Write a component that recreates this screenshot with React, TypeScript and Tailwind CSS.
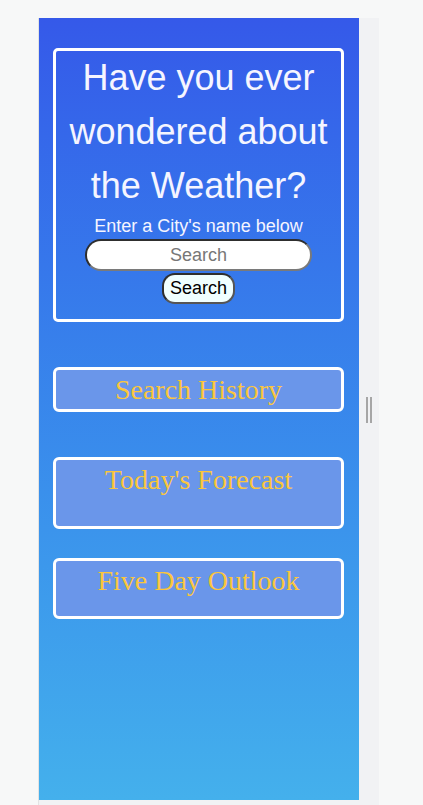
import React from 'react'

const serif = "font-['Liberation_Serif','Times_New_Roman',serif]"

function Panel({ title, className }: { title: string; className: string }) {
  return (
    <section
      className={`w-[291px] border-[3px] border-white rounded-[6px] bg-[#6a96ea] pt-[4px] text-center ${className}`}
    >
      <h2 className={`${serif} text-[28px] leading-[31px] text-[#fbc63c]`}>{title}</h2>
    </section>
  )
}

export default function App() {
  return (
    <div className="w-[423px] h-[805px] bg-[#f7f8f8] pt-[18px] pl-[38px] overflow-hidden">
      <div className="flex w-[341px] h-[787px] bg-[#f1f2f4] border-l border-[#e2e3e3]">
        <main className="w-[320px] h-[782px] bg-linear-to-b from-[#3559e9] to-[#44b0ec] pl-[14px] pr-[15px] pt-[30px] font-['Liberation_Sans',Arial,sans-serif]">
          <header className="w-[291px] border-[3px] border-white rounded-[5px] pb-[15px] flex flex-col items-center text-center">
            <h1 className="text-[36px] leading-[54px] text-[#f5f5ff] px-2">
              Have you ever wondered about the Weather?
            </h1>
            <p className="text-[18px] leading-[26px] text-[#f5f5ff]">Enter a City's name below</p>
            <input
              type="text"
              placeholder="Search"
              className="w-[227px] h-[32px] rounded-full bg-white border-2 border-t-[#2e2e2e] border-l-[#2e2e2e] border-r-[#7a7a7a] border-b-[#7a7a7a] text-center text-[18px] text-black placeholder:text-[#777] outline-none"
            />
            <button className="mt-[2px] px-[6px] py-[3px] rounded-[13px] bg-[#f0ffff] border-2 border-t-[#2e2e2e] border-l-[#2e2e2e] border-r-[#555] border-b-[#555] text-[18px] leading-[21px] text-black">
              Search
            </button>
          </header>

          <Panel title="Search History" className="mt-[45px] h-[45px]" />
          <Panel title="Today's Forecast" className="mt-[45px] h-[72px]" />
          <Panel title="Five Day Outlook" className="mt-[29px] h-[61px]" />
        </main>
        <div className="flex-1 flex justify-center pt-[379px]">
          <div className="flex gap-[2px] h-[26px]">
            <span className="w-[2px] h-full bg-[#a6a6a6]" />
            <span className="w-[2px] h-full bg-[#a6a6a6]" />
          </div>
        </div>
      </div>
    </div>
  )
}
